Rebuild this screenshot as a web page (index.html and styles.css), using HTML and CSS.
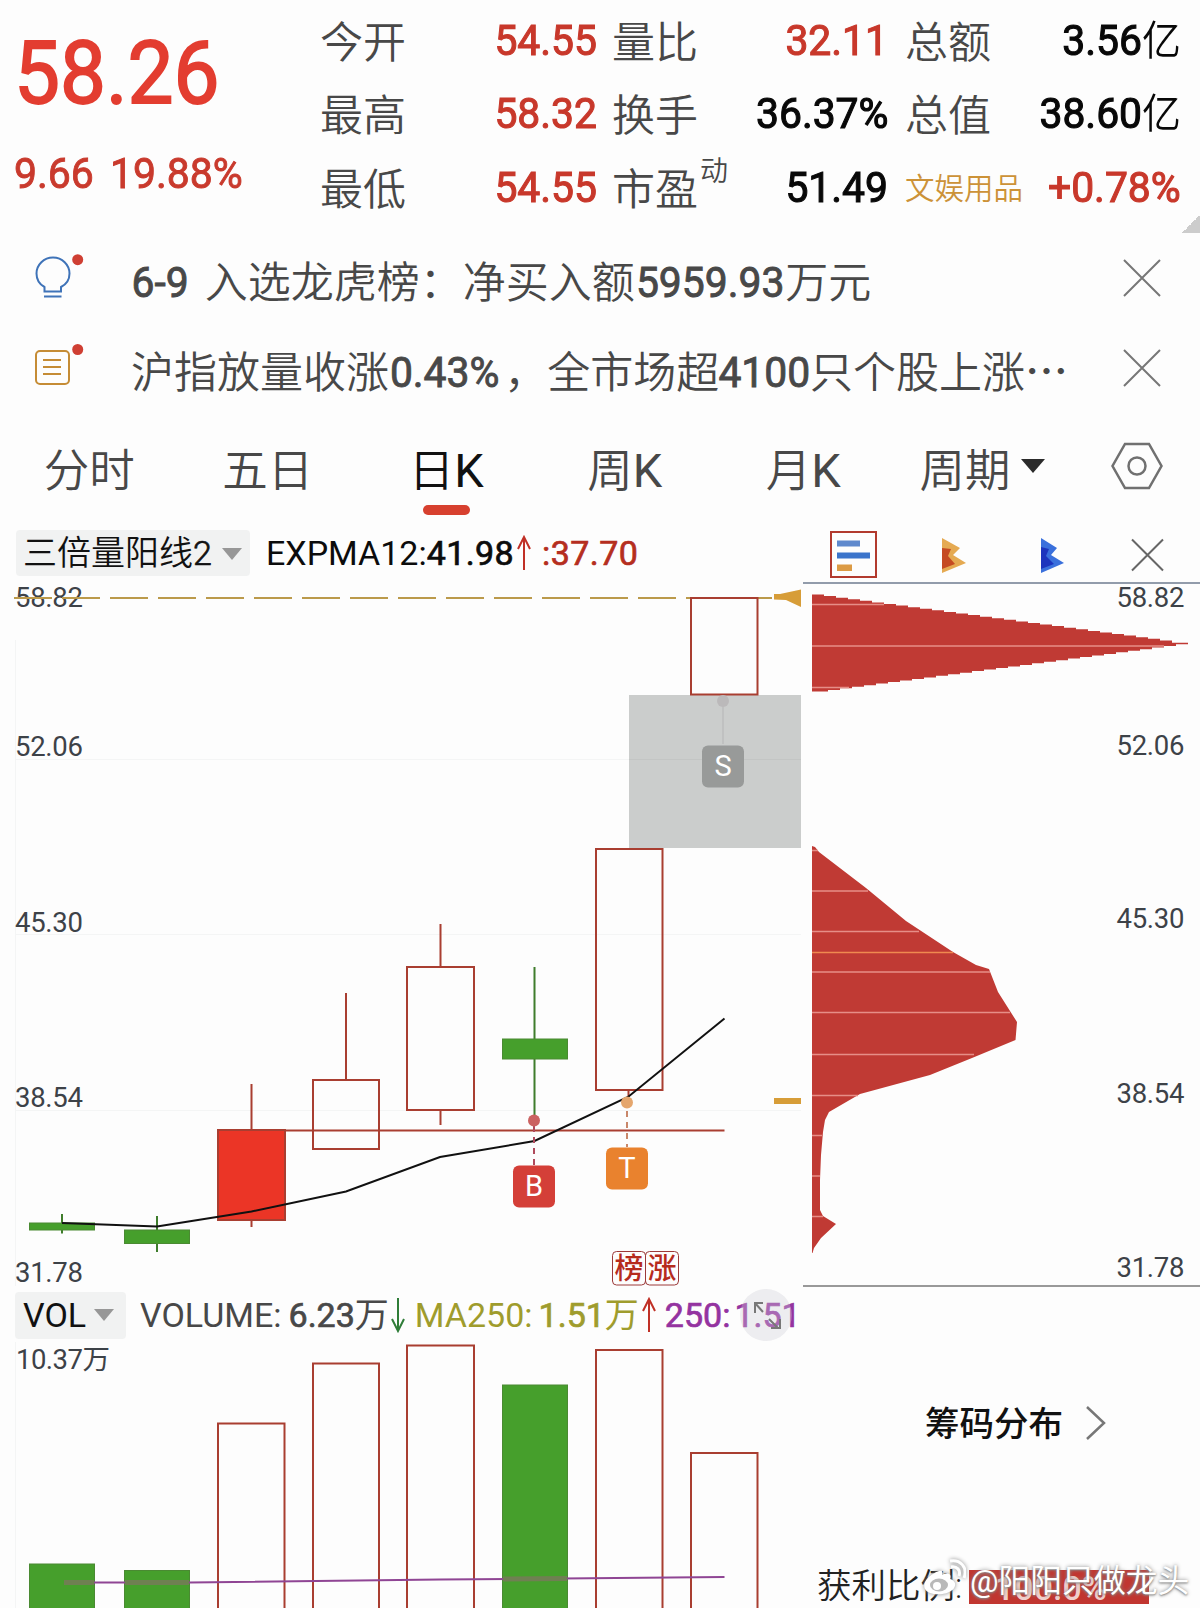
FILE: index.html
```
<!DOCTYPE html>
<html lang="zh-CN">
<head>
  <meta charset="UTF-8">
  <title>日K</title>
  <link rel="stylesheet" href="styles.css">
</head>
<body>

<!-- 行情 -->
<div class="quote">
  <div class="price-box">
    <div class="price">58.26</div>
    <div class="change"><span>9.66</span><span>19.88%</span></div>
  </div>
  <div class="stats">
    <span class="label">今开</span><span class="val red">54.55</span>
    <span class="label">量比</span><span class="val red">32.11</span>
    <span class="label">总额</span><span class="val">3.56<i>亿</i></span>
    <span class="label">最高</span><span class="val red">58.32</span>
    <span class="label">换手</span><span class="val">36.37%</span>
    <span class="label">总值</span><span class="val">38.60<i>亿</i></span>
    <span class="label">最低</span><span class="val red">54.55</span>
    <span class="label">市盈<sup>动</sup></span><span class="val">51.49</span>
    <span class="label industry">文娱用品</span><span class="val red">+0.78%</span>
  </div>
  <div class="corner"></div>
</div>

<!-- 提示 -->
<div class="notice">
  <svg class="notice-icon" viewBox="30 246 60 60">
    <path d="M44.5 291.500V287C39 284 36.500 279 36.500 273.500A16.500 16 0 0 1 69.500 273.500C69.500 279 67 284 61 287V291.500ZM44 296.500H61.500" fill="none" stroke="#3f73b8" stroke-width="2"/>
    <circle cx="77.700" cy="259.700" r="5.500" fill="#cf3f33"/>
  </svg>
  <p><span class="num date">6-9</span> 入选龙虎榜：净买入额<span class="num wide">5959.93</span>万元</p>
  <svg class="close" viewBox="0 0 38 38"><path d="M1 1L37 37M37 1L1 37"/></svg>
</div>
<div class="notice">
  <svg class="notice-icon" viewBox="30 336 60 60">
    <rect x="36" y="351" width="33" height="33" rx="4" fill="none" stroke="#c58c35" stroke-width="2"/>
    <path d="M43 360H61M43 367H61M43 374H61" stroke="#c58c35" stroke-width="2"/>
    <circle cx="77.700" cy="349.500" r="5.500" fill="#cf3f33"/>
  </svg>
  <p>沪指放量收涨<span class="num percent">0.43%</span>，全市场超<span class="num wide">4100</span>只个股上涨<span class="dots">⋯</span></p>
  <svg class="close" viewBox="0 0 38 38"><path d="M1 1L37 37M37 1L1 37"/></svg>
</div>

<!-- 周期切换 -->
<div class="tabs">
  <span class="tab">分时</span>
  <span class="tab">五日</span>
  <span class="tab active">日<b>K</b></span>
  <span class="tab">周<b>K</b></span>
  <span class="tab">月<b>K</b></span>
  <span class="period">周期</span>
  <svg class="caret" viewBox="0 0 24 14"><path d="M0 0H24L12 14Z" fill="#2b2b2b"/></svg>
  <svg class="setting" viewBox="0 0 52 48">
    <path d="M14 2H38L50.500 24L38 46H14L1.500 24Z"/>
    <circle cx="26" cy="24" r="8.500"/>
  </svg>
</div>

<div class="charts">
  <div class="left">
    <div class="legend k-legend">
      <span class="pill">三倍量阳线<em>2</em><svg viewBox="0 0 20 12"><path d="M0 0H20L10 12Z"/></svg></span>
      <span class="expma">EXPMA12:<span>41.98</span></span>
      <svg class="arrow up" viewBox="0 0 14 36"><path d="M7 35V2M1 14L7 2L13 14"/></svg>
      <span class="prev">:<span>37.70</span></span>
    </div>

    <!-- K线 -->
    <svg class="k-chart" viewBox="0 580 802 706">
      <path class="grid" d="M15 759.500H801M15 934.500H801M15 1110.500H801M15.500 640V1286"/>
      <g class="axis">
        <text x="15" y="607" textLength="68">58.82</text>
        <text x="15" y="756" textLength="68">52.06</text>
        <text x="15" y="931.500" textLength="68">45.30</text>
        <text x="15" y="1107" textLength="68">38.54</text>
        <text x="15" y="1281.500" textLength="68">31.78</text>
      </g>
      <path d="M14 598H772" stroke="#bb9a4b" stroke-width="2" stroke-dasharray="38 10"/>
      <rect x="629" y="695" width="172" height="153" fill="#cbcdcc"/>
      <path d="M629 759.500H801" stroke="#c3c5c4"/>

      <g class="down">
        <path d="M62 1214V1233.500M157 1216V1252M534.500 967V1115"/>
        <rect x="29.500" y="1223" width="65" height="7"/>
        <rect x="124.500" y="1230" width="65" height="13.500"/>
        <rect x="502.500" y="1039" width="65" height="20"/>
      </g>
      <g class="up-line">
        <path d="M251.500 1084V1227M346 993V1080M440.500 924V967M440.500 1110V1125M628.500 1090V1097"/>
        <rect x="218" y="1130" width="67" height="90" fill="#eb3526"/>
        <rect x="313" y="1080" width="66" height="69"/>
        <rect x="407" y="967" width="67" height="143"/>
        <rect x="596" y="849" width="66.500" height="241"/>
        <rect x="691" y="598" width="66.500" height="96.500"/>
        <path d="M285 1130.500H724.500"/>
      </g>
      <polyline class="ma" points="62,1223 157,1226.500 251.500,1211.500 346,1191.500 440,1157 534.500,1141 628,1097 724.500,1018.500"/>

      <!-- 买卖点 -->
      <path d="M723 702V744" stroke="#c0c1c1" stroke-width="2"/>
      <circle cx="723" cy="701" r="6" fill="#bbb9ba"/>
      <path d="M534 1126V1165" stroke="#b04a5c" stroke-width="2" stroke-dasharray="6 5"/>
      <circle cx="534" cy="1120.500" r="6" fill="#cb6261"/>
      <path d="M627 1111V1147" stroke="#c9876a" stroke-width="2" stroke-dasharray="6 5"/>
      <circle cx="627" cy="1102.500" r="6" fill="#e5a66d"/>
      <g class="mark">
        <rect x="702" y="745.500" width="42" height="42" rx="6" fill="#989a99"/>
        <text x="723" y="776">S</text>
        <rect x="513" y="1165.500" width="42" height="42" rx="6" fill="#d43f38"/>
        <text x="534" y="1196">B</text>
        <rect x="606" y="1147.500" width="42" height="42" rx="6" fill="#e9822e"/>
        <text x="627" y="1178">T</text>
      </g>
      <g class="tag">
        <rect x="612.500" y="1251.500" width="33" height="33.500" rx="4"/>
        <rect x="645.500" y="1251.500" width="33" height="33.500" rx="4"/>
        <text x="629" y="1279">榜</text>
        <text x="662" y="1279">涨</text>
      </g>
      <path d="M774 594H780L801 589.500V607L786 600L774 599.500ZM774 1098H801V1104H774Z" fill="#d79d38"/>
    </svg>

    <div class="legend v-legend">
      <span class="pill">VOL<svg viewBox="0 0 20 12"><path d="M0 0H20L10 12Z"/></svg></span>
      <span class="volume">VOLUME:<span>6.23</span>万</span>
      <svg class="arrow dn" viewBox="0 0 14 36"><path d="M7 1V34M1 22L7 34L13 22"/></svg>
      <span class="ma250">MA250:<span>1.51</span>万</span>
      <svg class="arrow up" viewBox="0 0 14 36"><path d="M7 35V2M1 14L7 2L13 14"/></svg>
      <span class="v250">250:<span>1.51</span></span>
      <div class="expand">
        <svg viewBox="0 0 52 52"><path d="M23 14H15V24M15 14L23 23M29 30L38 39M40 30V39H31"/></svg>
      </div>
    </div>

    <!-- 成交量 -->
    <svg class="v-chart" viewBox="0 1342 802 266">
      <path class="grid" d="M15.500 1342V1608"/>
      <text class="axis" x="16" y="1369"><tspan textLength="67">10.37</tspan>万</text>
      <g class="down">
        <rect x="29.500" y="1564" width="65" height="60"/>
        <rect x="124.500" y="1570.500" width="65" height="60"/>
        <rect x="502.500" y="1385" width="65" height="240"/>
      </g>
      <g class="up-line">
        <rect x="218" y="1423.500" width="66.500" height="200"/>
        <rect x="313" y="1363.500" width="66" height="260"/>
        <rect x="407" y="1345.500" width="67" height="280"/>
        <rect x="596" y="1350" width="66.500" height="280"/>
        <rect x="691" y="1453" width="66.500" height="180"/>
      </g>
      <path d="M94 1582.500H190L440 1579.500L724.500 1577" fill="none" stroke="#8f4594" stroke-width="2"/>
      <path d="M64 1582.500H94M125 1582.500H189M503 1579L567 1578.500" stroke="#6f8052" stroke-width="5"/>
    </svg>
  </div>

  <!-- 筹码 -->
  <div class="right">
    <div class="tools">
      <svg viewBox="803 526 397 56">
        <rect x="831" y="532" width="45" height="45" fill="none" stroke="#b23a2e" stroke-width="2"/>
        <path d="M837 540.500H860V546.500H837Z" fill="#5f89cd"/>
        <path d="M837 552.500H870V558.500H837Z" fill="#3b74cb"/>
        <path d="M837 564.500H852V571H837Z" fill="#dc9b45"/>
        <path d="M942 538L960 548L953 555L966 563L942 573Z" fill="#e5aa52"/>
        <path d="M942 548L951 549L948 556L955 564L942 569Z" fill="#c54a22"/>
        <path d="M1041 538L1057 548L1051 555L1064 563L1041 573Z" fill="#3a70dc"/>
        <path d="M1041 547L1049 549L1046 556L1054 564L1041 569Z" fill="#1c34bd"/>
        <path d="M1132 539.500L1163 570.500M1163 539.500L1132 570.500" stroke="#666" stroke-width="2"/>
      </svg>
    </div>
    <svg class="chips" viewBox="803 584 397 701">
      <path id="chip-top" fill="#c03a34"/>
      <path d="M812 846L815 847L819 852L866 888L906 921L953 952L976 965L989 969L998 992L1010 1011L1017 1022L1015.500 1040L972 1058L930 1075L860 1094L829 1112L825 1120L823 1132L821 1155L820 1180V1210L823 1216L836 1224L821 1238L814 1248L812.500 1253H812Z" fill="#c03a34"/>
      <g class="chip-lines">
        <path d="M812 604.500H884M812 646H1164M812 687.500H849"/>
        <path d="M812 850.500H818M812 891H868M812 931.500H919M812 972H990M812 1012.500H1010M812 1054.500H974M812 1095.500H858M812 1135.500H822M812 1176H820M812 1216.500H823"/>
        <path d="M812 952.500H953" stroke="#f0894f"/>
      </g>
      <g class="axis">
        <text x="1116.500" y="607" textLength="68">58.82</text>
        <text x="1116.500" y="754.500" textLength="68">52.06</text>
        <text x="1116.500" y="928" textLength="68">45.30</text>
        <text x="1116.500" y="1102.500" textLength="68">38.54</text>
        <text x="1116.500" y="1276.500" textLength="68">31.78</text>
      </g>
    </svg>
    <div class="chip-link">筹码分布<svg viewBox="0 0 20 34"><path d="M1 1L18 17L1 33"/></svg></div>
    <div class="profit">
      <span>获利比例:</span><span class="ratio">100.0%</span>
      <div class="watermark">
        <svg viewBox="0 0 44 38">
          <path d="M17 12C6 16 0 24 3 30C7 38 30 37 33 27C34 23 31 21 28 20C30 15 26 13 20 16C21 12 20 11 17 12Z"/>
          <ellipse cx="17" cy="26" rx="9" ry="6.500" fill="#b9b9b9"/>
          <circle cx="15" cy="27" r="4"/>
          <path d="M29 8C35 7 39 11 37 17M28 2C38 0 46 8 42 19" fill="none" stroke="#fff" stroke-width="3"/>
        </svg>
        <span>@阳阳只做龙头</span>
      </div>
    </div>
  </div>
</div>

<script>
  // 顶部筹码峰：阶梯状边缘
  const left = 812, tip = 1176, step = 12;
  let d = 'M812 594.5';
  for (let x = left + step; x <= tip; x += step) {
    const y = 594.5 + (x - left - step) * 48 / (tip - left);
    d += `V${y.toFixed(1)}H${x}`;
  }
  d += 'V642.8H1188V644.2H1176';
  for (let x = tip - step; x >= left; x -= step) {
    const y = 692 - (x - left) * 47.5 / (tip - left);
    d += `V${y.toFixed(1)}H${x}`;
  }
  document.getElementById('chip-top').setAttribute('d', d + 'H812Z');
</script>

</body>
</html>
```
FILE: styles.css
```
* { box-sizing: border-box; }
body { margin: 0; width: 1200px; height: 1608px; overflow: hidden; background: #fdfdfd; color: #484848; font-family: Roboto, "Noto Sans CJK SC", sans-serif; }
svg { display: block; flex: none; }
i, em { font-style: normal; }

/* 行情 */
.quote { position: relative; display: flex; height: 236px; padding-top: 4px; }
.price-box { width: 320px; padding-left: 14px; white-space: nowrap; }
.price { height: 100px; margin-top: 19px; line-height: 100px; font-size: 87px; color: #e33d30; -webkit-text-stroke: 1.800px; transform: scaleX(.94); transform-origin: left; }
.change { display: flex; gap: 17px; margin-top: 25px; font-size: 43px; line-height: 50px; color: #c93a2d; -webkit-text-stroke: .900px; transform: scaleX(.952); transform-origin: left; }
.stats { display: grid; grid-template-columns: 110px 167px 110px 180px 120px 174px; grid-auto-rows: 73.5px; }
.stats > * { line-height: 73px; white-space: nowrap; }
.stats .label { margin-top: -1.500px; font-size: 43px; font-weight: 350; font-family: "Noto Sans CJK SC", sans-serif; }
.stats .label:nth-child(6n+3) { margin-left: 15px; }
.stats .label:nth-child(6n+5) { margin-left: 18px; }
.stats sup { font-size: 28px; line-height: 0; vertical-align: 24px; margin-left: 2px; }
.stats .industry { font-size: 29.500px; color: #cc9238; font-weight: 350; }
.val { margin-top: -.500px; justify-self: end; font-size: 43px; color: #080808; -webkit-text-stroke: 1.100px; transform: scaleX(.95); transform-origin: right; }
.val:nth-child(6n+4) { margin-right: -1px; }
.val i { font-size: 41px; font-weight: 350; -webkit-text-stroke: 0; }
.red { color: #c8382b; }
.corner { position: absolute; right: 0; bottom: 3px; width: 18px; height: 18px; background: linear-gradient(135deg, transparent 50%, #ccc 50%); }

/* 提示 */
.notice { display: flex; align-items: center; height: 90px; padding-left: 30px; }
.notice-icon { width: 60px; height: 60px; margin-top: -10px; }
.notice p { width: 993px; margin: 0 0 0 41px; font-size: 43px; font-weight: 350; line-height: 60px; white-space: nowrap; font-family: "Noto Sans CJK SC", sans-serif; }
.num { display: inline-block; font-family: Roboto, sans-serif; font-size: 43px; font-weight: 400; -webkit-text-stroke: .900px; transform: scaleX(.95) translateY(-1px); }
.date { margin: 0 5px 0 -1px; }
.percent { margin: 0 2px 0 -2px; }
.wide { margin: 0 -3px; }
.dots { font-weight: 500; }
.close { width: 38px; height: 38px; margin-top: -7px; margin-left: -1px; }
.close path { stroke: #777; stroke-width: 2; }

/* 周期切换 */
.tabs { display: flex; align-items: center; height: 110px; padding-bottom: 8px; font-family: "Noto Sans CJK SC", sans-serif; font-size: 45.500px; font-weight: 350; }
.tab { position: relative; width: 178.500px; text-align: center; }
.tab b { font-family: Roboto, sans-serif; font-size: 47px; font-weight: 400; }
.active { color: #111; }
.active::after { content: ""; position: absolute; left: 66px; bottom: -15px; width: 47px; height: 10px; border-radius: 5px; background: #d7402f; }
.period { margin-left: 27px; }
.caret { width: 24px; height: 14px; margin-left: 10px; margin-top: -3px; }
.setting { width: 52px; height: 48px; margin-left: 66px; margin-top: -2px; }
.setting path, .setting circle { fill: none; stroke: #707070; stroke-width: 2.500; }

/* 图表 */
.charts { display: flex; }
.left { width: 803px; }
.legend { display: flex; align-items: center; width: 802px; font-size: 34px; white-space: nowrap; }
.legend > span { flex: none; line-height: 44px; }
.k-legend { height: 54px; color: #0c0c0c; }
.pill { display: flex; align-items: center; height: 46px; padding-left: 7px; border-radius: 4px; background: #f1f2f2; color: #111; }
.pill svg { width: 20px; height: 12px; fill: #979797; }
.k-legend .pill { width: 234px; margin-left: 16px; font-size: 34px; font-weight: 350; }
.k-legend .pill svg { margin: 2px 0 0 10px; }
.expma { margin-left: 16px; }
.expma span, .prev, .pill em, .volume span, .ma250 span, .v250 { -webkit-text-stroke: .700px; }
.expma span { letter-spacing: .400px; }
.arrow { width: 14px; height: 36px; fill: none; stroke-width: 2; }
.k-legend .arrow { margin-left: 3px; }
.up { stroke: #c03026; }
.dn { stroke: #2f7d38; }
.prev { margin-left: 11px; color: #b52e20; letter-spacing: .400px; }
.k-chart { width: 802px; height: 706px; }
.grid { stroke: #f4f5f5; fill: none; }
.axis { font-size: 27.500px; fill: #3d4248; }
.down { fill: #469f2c; }
.down path { stroke: #3f7d2c; stroke-width: 2; }
.down rect { stroke: #4a8a32; }
.up-line { fill: none; stroke: #a93e31; stroke-width: 2; }
.ma { fill: none; stroke: #111; stroke-width: 2; }
.mark text { fill: #fff; font-size: 29px; text-anchor: middle; }
.tag rect { fill: none; stroke: #9c3a3a; }
.tag text { fill: #b62b1d; font-size: 29px; font-weight: 500; text-anchor: middle; }

.v-legend { position: relative; height: 56px; overflow: hidden; padding-top: 2px; }
.v-legend .pill { width: 111px; height: 47px; margin-left: 15px; padding-left: 8px; }
.v-legend .pill svg { margin-left: 8px; }
.v-legend > span:not(.pill) { height: 44px; }
.volume { margin-left: 14px; }
.volume span { margin-left: 7px; }
.ma250 { margin-left: 10px; color: #9f9c2d; }
.ma250 span { margin-left: 6px; }
.v-legend .dn { margin-left: 2px; }
.v-legend .up { margin-left: 3px; }
.v250 { margin-left: 9px; color: #9433a0; }
.v250 span { margin-left: 4px; }
.expand { position: absolute; left: 740px; top: 3px; width: 52px; height: 52px; border-radius: 50%; background: rgba(205, 205, 215, .35); }
.expand path { fill: none; stroke: #777; stroke-width: 2; }
.v-chart { width: 802px; height: 266px; }

/* 筹码 */
.right { width: 397px; }
.tools { height: 58px; border-bottom: 2px solid #929cab; }
.chips { width: 397px; height: 701px; }
.chip-lines { stroke: #e68e87; stroke-width: 1.500; }
.chip-link { display: flex; align-items: center; height: 276px; padding: 0 0 6px 122px; border-top: 2px solid #999; font-size: 34.500px; font-weight: 500; color: #111; }
.chip-link svg { width: 20px; height: 34px; margin: 3px 0 0 23px; }
.chip-link path { fill: none; stroke: #777; stroke-width: 2.500; }
.profit { position: relative; display: flex; align-items: center; height: 48px; padding: 0 0 4px 14px; font-size: 34.500px; color: #222; font-weight: 350; }
.ratio { position: absolute; left: 166px; top: 9px; width: 180px; height: 34px; padding-left: 26px; background: #c13630; color: #f0d0cd; line-height: 36px; font-size: 34px; font-weight: 500; }
.watermark { position: absolute; left: 119px; top: -4px; display: flex; align-items: center; height: 42px; gap: 4px; font-size: 31.800px; font-weight: 400; color: #fff; white-space: nowrap; text-shadow: 0 0 4px #888, 0 1px 2px #888; }
.watermark svg { width: 44px; height: 38px; fill: #fff; filter: drop-shadow(0 0 2px #888); }
```
